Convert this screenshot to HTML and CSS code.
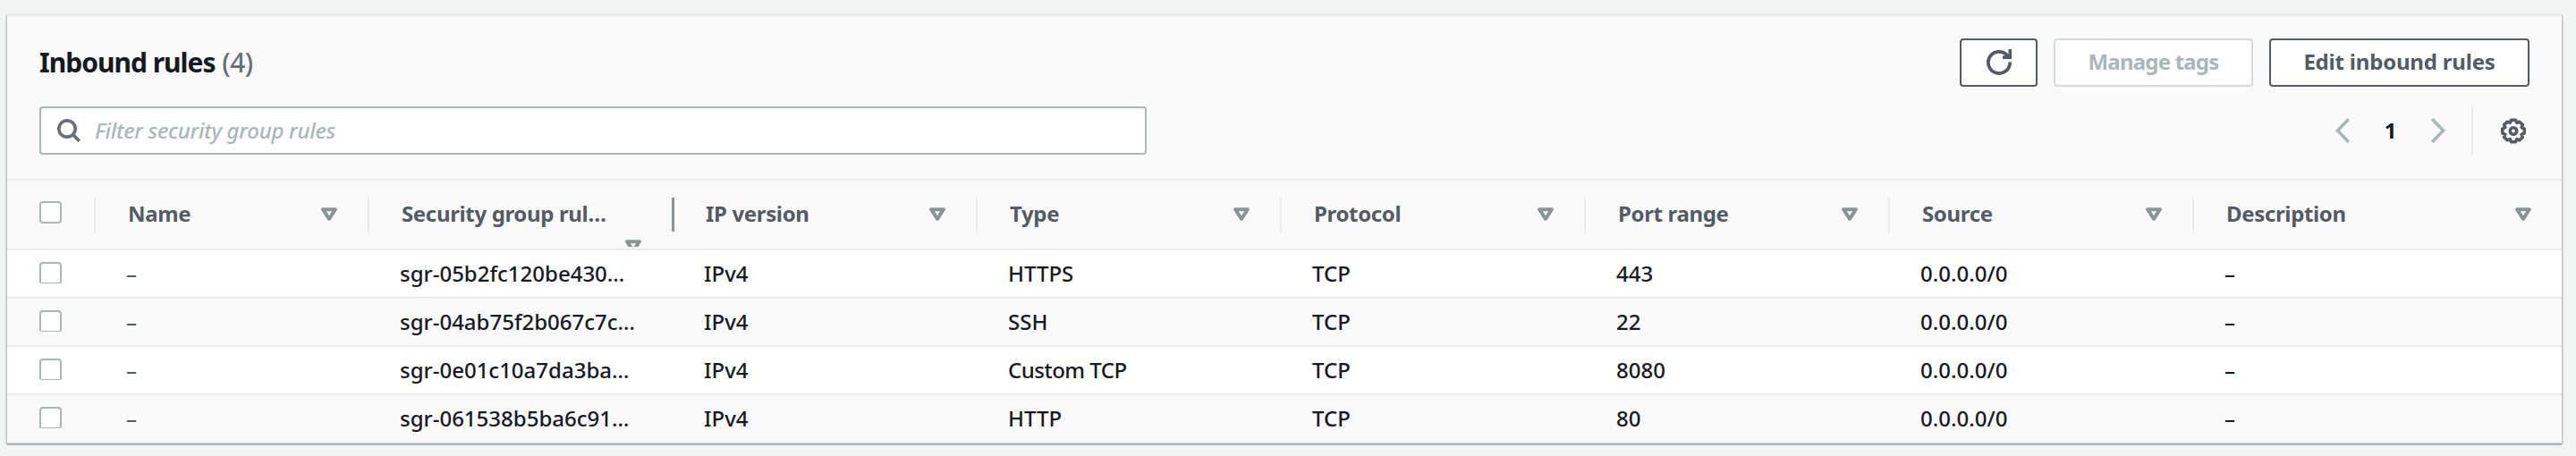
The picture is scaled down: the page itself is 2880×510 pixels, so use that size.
FILE: index.html
```html
<!DOCTYPE html>
<html lang="en">
<head>
<meta charset="utf-8">
<title>Inbound rules</title>
<link rel="stylesheet" href="styles.css">
</head>
<body>
<svg class="defs" aria-hidden="true">
  <symbol id="sort" viewBox="0 0 18 16" preserveAspectRatio="xMidYMin slice"><path d="M2.1 2.2h13.8L9 12.8z" fill="none" stroke="currentColor" stroke-width="4" stroke-linejoin="round"/></symbol>
</svg>
<section class="panel">
  <header class="head">
    <div class="title-row">
      <h2 class="title">Inbound rules <span class="count">(4)</span></h2>
      <div class="actions">
        <button class="btn btn-icon" aria-label="Refresh"><svg width="28" height="29" viewBox="0 0 28 29" fill="none" stroke="currentColor" stroke-width="3.8"><path d="M26.1 14.4A12.1 12.1 0 1 1 22.8 6.6L25 9"/><path d="M26.4 0v9.2H18"/></svg></button>
        <button class="btn btn-disabled">Manage tags</button>
        <button class="btn btn-edit">Edit inbound rules</button>
      </div>
    </div>
    <div class="tools">
      <div class="search">
        <svg width="26" height="26" viewBox="0 0 26 26" fill="none" stroke="currentColor" stroke-width="3.7"><circle cx="11" cy="11" r="9.2"/><path d="M17.4 17.4l7.4 7.4"/></svg>
        <span class="placeholder">Filter security group rules</span>
      </div>
      <div class="pager">
        <svg class="arrow" width="16" height="28" viewBox="0 0 16 28"><path d="M14.8 1.2L2.4 14l12.4 12.8"/></svg>
        <span class="page">1</span>
        <svg class="arrow" width="16" height="28" viewBox="0 0 16 28"><path d="M1.2 1.2L13.6 14 1.2 26.8"/></svg>
        <span class="gear"><svg width="28" height="29" viewBox="-14 -14.5 28 29" fill="none" stroke="currentColor" stroke-width="3.6" stroke-linejoin="round"><path d="M-2.4-12.3H2.4L3.8-9.2 6.9-10.3 10.3-6.9 9.2-3.8 12.3-2.4V2.4L9.2 3.8 10.3 6.9 6.9 10.3 3.8 9.2 2.4 12.3H-2.4L-3.8 9.2-6.9 10.3-10.3 6.9-9.2 3.8-12.3 2.4V-2.4L-9.2-3.8-10.3-6.9-6.9-10.3-3.8-9.2z"/><circle r="3.7"/></svg></span>
      </div>
    </div>
  </header>
  <div class="row thead">
    <div class="check"><i class="box"></i></div>
    <div class="th"><span>Name</span><svg class="sort"><use href="#sort"/></svg></div>
    <div class="th th-narrow"><span>Security group rul…</span><svg class="sort"><use href="#sort"/></svg></div>
    <div class="th th-resize"><span>IP version</span><svg class="sort"><use href="#sort"/></svg></div>
    <div class="th"><span>Type</span><svg class="sort"><use href="#sort"/></svg></div>
    <div class="th"><span>Protocol</span><svg class="sort"><use href="#sort"/></svg></div>
    <div class="th"><span>Port range</span><svg class="sort"><use href="#sort"/></svg></div>
    <div class="th"><span>Source</span><svg class="sort"><use href="#sort"/></svg></div>
    <div class="th"><span>Description</span><svg class="sort"><use href="#sort"/></svg></div>
  </div>
  <div class="row"><div class="check"><i class="box"></i></div><div class="muted">–</div><div class="id">sgr-05b2fc120be430…</div><div>IPv4</div><div>HTTPS</div><div>TCP</div><div>443</div><div>0.0.0.0/0</div><div>–</div></div>
  <div class="row"><div class="check"><i class="box"></i></div><div class="muted">–</div><div class="id">sgr-04ab75f2b067c7c…</div><div>IPv4</div><div>SSH</div><div>TCP</div><div>22</div><div>0.0.0.0/0</div><div>–</div></div>
  <div class="row"><div class="check"><i class="box"></i></div><div class="muted">–</div><div class="id">sgr-0e01c10a7da3ba…</div><div>IPv4</div><div class="tight">Custom TCP</div><div>TCP</div><div>8080</div><div>0.0.0.0/0</div><div>–</div></div>
  <div class="row"><div class="check"><i class="box"></i></div><div class="muted">–</div><div class="id">sgr-061538b5ba6c91…</div><div>IPv4</div><div>HTTP</div><div>TCP</div><div>80</div><div>0.0.0.0/0</div><div>–</div></div>
</section>
</body>
</html>
```
FILE: styles.css
```css
* { box-sizing: border-box; }
body {
  margin: 0;
  height: 510px;
  overflow: hidden;
  padding: 16px 16px 0 8px;
  background: #f2f3f3;
  color: #16191f;
  font: 500 24px/34px "Noto Sans", "Open Sans", sans-serif;
}
.defs { position: absolute; width: 0; height: 0; }
.panel {
  height: 480px;
  background: #fafafa;
  border-top: 2px solid #ebebeb;
  box-shadow: 0 1px 1px #8d979b, 1px 1px 2px #b5bec2, -1px 1px 2px #b5bec2;
}
.head { height: 182px; padding: 25px 36px 0; }
.title-row { display: flex; justify-content: space-between; height: 76px; }
.title { margin: 7px 0 0; font-size: 30px; line-height: 40px; letter-spacing: -1px; font-weight: 700; }
.count { margin-left: 1px; color: #687078; font-weight: 500; letter-spacing: -0.5px; }
.actions { display: flex; gap: 18px; }
.btn {
  display: flex; align-items: center; justify-content: center;
  height: 54px; padding: 0 0 2px;
  border: 2px solid #545b64; border-radius: 4px;
  background: #fff; color: #545b64;
  font: 700 24px/34px "Noto Sans", sans-serif;
}
.btn-icon { width: 87px; }
.btn-disabled { width: 223px; color: #aab7b8; border-color: #d5dbdb; letter-spacing: -0.8px; }
.btn-edit { width: 291px; letter-spacing: -0.2px; }
.tools { display: flex; justify-content: space-between; }
.search {
  display: flex; align-items: center; gap: 16px;
  width: 1238px; height: 54px; padding-left: 18px;
  border: 2px solid #aab7b8; border-radius: 4px;
  background: #fff; color: #687078;
}
.placeholder { color: #aab7b8; font-style: italic; letter-spacing: -0.3px; }
.pager { display: flex; align-items: center; height: 54px; }
.arrow { fill: none; stroke: #aab7b8; stroke-width: 3.6; }
.page { width: 91px; text-align: center; font-weight: 700; }
.gear {
  display: flex; align-items: center; justify-content: flex-end;
  width: 65px; height: 54px; margin-left: 29px; padding-right: 4px;
  border-left: 2px solid #ebebeb; color: #545b64;
}
.row {
  display: grid;
  grid-template-columns: 97px 306px repeat(6, 340px) 1fr;
  align-items: center;
  height: 54px;
  border-bottom: 2px solid #ebebeb;
  background: #fff;
}
.row:nth-child(even) { background: #fafafa; }
.row:nth-child(odd) { background: #fff; }
.row > div { padding-left: 36px; white-space: nowrap; }
.box {
  display: block; width: 25px; height: 24px; margin-bottom: 2px;
  border: 2px solid #aab7b8; border-bottom-width: 1px; border-radius: 4px 4px 2px 2px;
  background: #fff;
}
.muted { color: #545b64; }
.tight { letter-spacing: -0.5px; }
.row.thead {
  height: 80px; border-top: 2px solid #ebebeb;
  background: #fafafa; color: #545b64;
  font-weight: 700; letter-spacing: -0.35px;
}
.row:nth-child(odd) .box { margin-bottom: 2px; }
.thead .check .box { height: 25px; margin-bottom: 5px; border-bottom-width: 2px; border-radius: 4px; }
.row > .th {
  display: flex; align-items: center; justify-content: space-between;
  height: 38px; padding: 0 34px 0 36px;
  border-left: 2px solid #ebebeb;
}
.th span { padding-bottom: 2px; }
.row > .th-resize { padding-left: 35px; border-left: 3px solid #879596; }
.sort { width: 18px; height: 16px; color: #879596; }
.th-narrow .sort { align-self: flex-end; height: 8px; margin-bottom: -17px; }
```
